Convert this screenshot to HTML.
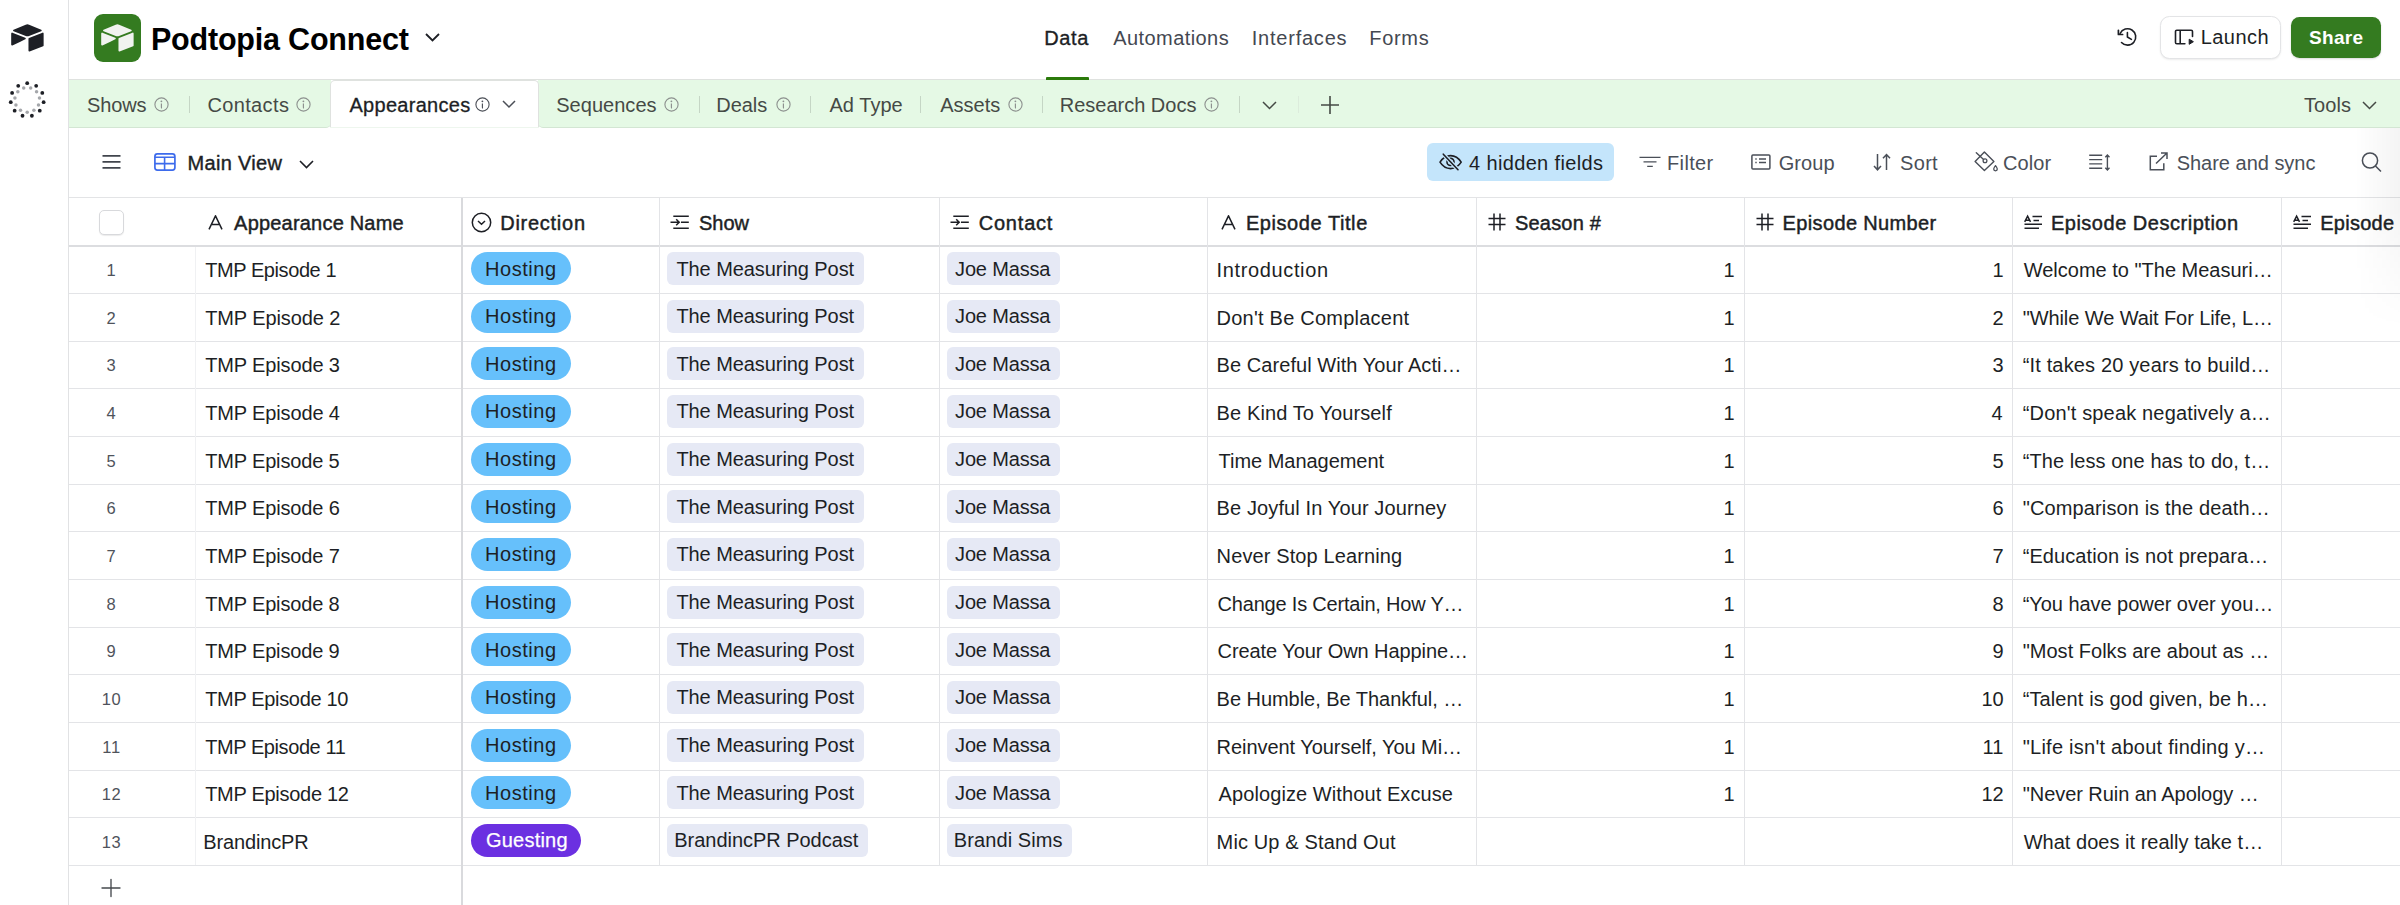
<!DOCTYPE html><html><head><meta charset="utf-8"><title>Podtopia Connect: Appearances</title><style>*{box-sizing:border-box;margin:0;padding:0}
html,body{width:2400px;height:905px;overflow:hidden;background:#fff;font-family:"Liberation Sans", sans-serif;color:#1d1f25}
.a{position:absolute}
.t{position:absolute;white-space:nowrap}
svg{position:absolute;overflow:visible}</style></head><body>
<div class="a" style="left:68px;top:0;width:1px;height:905px;background:#e1e2e4"></div>
<svg style="left:11px;top:23.5px" width="33" height="28" viewBox="10 10 180 150" fill="#1d1f25"><path d="M90.039 12.368 24.079 39.66c-3.667 1.519-3.63 6.729.062 8.192l66.235 26.266a24.58 24.58 0 0 0 18.12 0l66.236-26.266c3.69-1.463 3.729-6.673.06-8.191l-65.96-27.293a24.58 24.58 0 0 0-18.793 0"/><path d="M105.312 88.46v65.617c0 3.12 3.147 5.258 6.048 4.108l73.806-28.648a4.42 4.42 0 0 0 2.79-4.108V59.813c0-3.121-3.147-5.258-6.048-4.108l-73.806 28.648a4.42 4.420 0 0 0-2.79 4.108"/><path d="m88.078 91.846-21.904 10.576-2.224 1.075-46.238 22.155c-2.930 1.414-6.672-.722-6.672-3.978V60.088c0-1.178.604-2.195 1.414-2.96a5 5 0 0 1 1.12-.84c1.104-.663 2.68-.84 4.020-.31L87.71 83.76c3.564 1.414 3.844 6.408.368 8.087"/></svg>
<svg style="left:0;top:0" width="60" height="130"><circle cx="27.20" cy="83.20" r="1.9" fill="#1d1f25"/><circle cx="30.69" cy="87.90" r="1.75" fill="#a5a7ab"/><circle cx="36.17" cy="85.84" r="1.9" fill="#1d1f25"/><circle cx="36.57" cy="91.68" r="1.75" fill="#a5a7ab"/><circle cx="42.30" cy="92.90" r="1.9" fill="#1d1f25"/><circle cx="39.47" cy="98.04" r="1.75" fill="#a5a7ab"/><circle cx="43.63" cy="102.16" r="1.9" fill="#1d1f25"/><circle cx="38.48" cy="104.95" r="1.75" fill="#a5a7ab"/><circle cx="39.75" cy="110.67" r="1.9" fill="#1d1f25"/><circle cx="33.90" cy="110.23" r="1.75" fill="#a5a7ab"/><circle cx="31.88" cy="115.73" r="1.9" fill="#1d1f25"/><circle cx="27.20" cy="112.20" r="1.75" fill="#a5a7ab"/><circle cx="22.52" cy="115.73" r="1.9" fill="#1d1f25"/><circle cx="20.50" cy="110.23" r="1.75" fill="#a5a7ab"/><circle cx="14.65" cy="110.67" r="1.9" fill="#1d1f25"/><circle cx="15.92" cy="104.95" r="1.75" fill="#a5a7ab"/><circle cx="10.77" cy="102.16" r="1.9" fill="#1d1f25"/><circle cx="14.93" cy="98.04" r="1.75" fill="#a5a7ab"/><circle cx="12.10" cy="92.90" r="1.9" fill="#1d1f25"/><circle cx="17.83" cy="91.68" r="1.75" fill="#a5a7ab"/><circle cx="18.23" cy="85.84" r="1.9" fill="#1d1f25"/><circle cx="23.71" cy="87.90" r="1.75" fill="#a5a7ab"/></svg>
<div class="a" style="left:93.5px;top:14px;width:47.5px;height:47.5px;border-radius:9px;background:#347b20"></div>
<svg style="left:101px;top:24px" width="33" height="28" viewBox="10 10 180 150" fill="#f1f3f0"><path d="M90.039 12.368 24.079 39.66c-3.667 1.519-3.63 6.729.062 8.192l66.235 26.266a24.58 24.58 0 0 0 18.12 0l66.236-26.266c3.69-1.463 3.729-6.673.06-8.191l-65.96-27.293a24.58 24.58 0 0 0-18.793 0"/><path d="M105.312 88.46v65.617c0 3.12 3.147 5.258 6.048 4.108l73.806-28.648a4.42 4.42 0 0 0 2.79-4.108V59.813c0-3.121-3.147-5.258-6.048-4.108l-73.806 28.648a4.42 4.420 0 0 0-2.79 4.108"/><path d="m88.078 91.846-21.904 10.576-2.224 1.075-46.238 22.155c-2.930 1.414-6.672-.722-6.672-3.978V60.088c0-1.178.604-2.195 1.414-2.96a5 5 0 0 1 1.12-.84c1.104-.663 2.68-.84 4.020-.31L87.71 83.76c3.564 1.414 3.844 6.408.368 8.087"/></svg>
<svg style="left:425px;top:32.5px" width="15" height="9" viewBox="0 0 15 9"><path d="M1 1l6.5 6.5L14 1" fill="none" stroke="#1d1f25" stroke-width="1.8"/></svg>
<svg style="left:2116px;top:27px" width="22" height="21" viewBox="0 0 22 21"><path d="M4.1 6.5A8.2 8.2 0 1 1 5.5 15.5" fill="none" stroke="#1d1f25" stroke-width="1.6" stroke-linecap="round"/><path d="M2.4 3.3V7.5H6.6" fill="none" stroke="#1d1f25" stroke-width="1.7" stroke-linecap="round" stroke-linejoin="round"/><path d="M11.4 5.5V10L15.4 12.4" fill="none" stroke="#1d1f25" stroke-width="1.6" stroke-linecap="round" stroke-linejoin="round"/></svg>
<div class="a" style="left:2160px;top:16px;width:120.5px;height:43px;border-radius:9.5px;background:#fff;border:1px solid #e3e4e6;box-shadow:0 1px 2px rgba(0,0,0,0.08)"></div>
<svg style="left:2174px;top:29px" width="21" height="17" viewBox="0 0 21 17"><path d="M10.9 14.7H2.8A1.3 1.3 0 0 1 1.5 13.4V2.6A1.3 1.3 0 0 1 2.8 1.3H17.2A1.3 1.3 0 0 1 18.5 2.6V7.4M6.2 1.3V14.7" fill="none" stroke="#1d1f25" stroke-width="1.6" stroke-linecap="round"/><path d="M15.2 10.2L19.4 12.7L15.2 15.3Z" fill="#1d1f25" stroke="#1d1f25" stroke-width="1" stroke-linejoin="round"/></svg>
<div class="a" style="left:2291px;top:17px;width:90px;height:41px;border-radius:8.5px;background:#347b20;box-shadow:0 1px 2px rgba(0,0,0,0.15)"></div>
<div class="a" style="left:69px;top:79px;width:2331px;height:1px;background:#dfe2df"></div>
<div class="a" style="left:69px;top:80px;width:262px;height:48px;background:#e5f9e5;border-bottom:1px solid #d3e6d3;border-bottom-right-radius:5px"></div>
<div class="a" style="left:538px;top:80px;width:1862px;height:48px;background:#e5f9e5;border-bottom:1px solid #d3e6d3;border-bottom-left-radius:5px"></div>
<div class="a" style="left:330px;top:127px;width:209px;height:1px;background:#eef6ee"></div>
<div class="a" style="left:330px;top:80px;width:209px;height:47px;background:#fff;border-radius:5px 5px 0 0;border:1px solid #dfe2df;border-bottom:none"></div>
<svg style="left:154px;top:97px" width="15" height="15" viewBox="0 0 15 15"><circle cx="7.5" cy="7.5" r="6.6" fill="none" stroke="#8c908e" stroke-width="1.1"/><circle cx="7.4" cy="4.3" r="0.9" fill="#8c908e"/><path d="M7.4 6.4v4.2q0 0.6 0.6 0.7" fill="none" stroke="#8c908e" stroke-width="1.15"/></svg>
<div class="a" style="left:189px;top:96px;width:1px;height:17px;background:#c5d6c5"></div>
<svg style="left:296px;top:97px" width="15" height="15" viewBox="0 0 15 15"><circle cx="7.5" cy="7.5" r="6.6" fill="none" stroke="#8c908e" stroke-width="1.1"/><circle cx="7.4" cy="4.3" r="0.9" fill="#8c908e"/><path d="M7.4 6.4v4.2q0 0.6 0.6 0.7" fill="none" stroke="#8c908e" stroke-width="1.15"/></svg>
<svg style="left:475px;top:97px" width="15" height="15" viewBox="0 0 15 15"><circle cx="7.5" cy="7.5" r="6.6" fill="none" stroke="#4b4f57" stroke-width="1.1"/><circle cx="7.4" cy="4.3" r="0.9" fill="#4b4f57"/><path d="M7.4 6.4v4.2q0 0.6 0.6 0.7" fill="none" stroke="#4b4f57" stroke-width="1.15"/></svg>
<svg style="left:502px;top:99.7px" width="14" height="9" viewBox="0 0 14 9"><path d="M1 1l6 6 6-6" fill="none" stroke="#4b4f57" stroke-width="1.5"/></svg>
<svg style="left:664px;top:97px" width="15" height="15" viewBox="0 0 15 15"><circle cx="7.5" cy="7.5" r="6.6" fill="none" stroke="#8c908e" stroke-width="1.1"/><circle cx="7.4" cy="4.3" r="0.9" fill="#8c908e"/><path d="M7.4 6.4v4.2q0 0.6 0.6 0.7" fill="none" stroke="#8c908e" stroke-width="1.15"/></svg>
<div class="a" style="left:699px;top:96px;width:1px;height:17px;background:#c5d6c5"></div>
<svg style="left:775.5px;top:97px" width="15" height="15" viewBox="0 0 15 15"><circle cx="7.5" cy="7.5" r="6.6" fill="none" stroke="#8c908e" stroke-width="1.1"/><circle cx="7.4" cy="4.3" r="0.9" fill="#8c908e"/><path d="M7.4 6.4v4.2q0 0.6 0.6 0.7" fill="none" stroke="#8c908e" stroke-width="1.15"/></svg>
<div class="a" style="left:810px;top:96px;width:1px;height:17px;background:#c5d6c5"></div>
<div class="a" style="left:920px;top:96px;width:1px;height:17px;background:#c5d6c5"></div>
<svg style="left:1007.5px;top:97px" width="15" height="15" viewBox="0 0 15 15"><circle cx="7.5" cy="7.5" r="6.6" fill="none" stroke="#8c908e" stroke-width="1.1"/><circle cx="7.4" cy="4.3" r="0.9" fill="#8c908e"/><path d="M7.4 6.4v4.2q0 0.6 0.6 0.7" fill="none" stroke="#8c908e" stroke-width="1.15"/></svg>
<div class="a" style="left:1042px;top:96px;width:1px;height:17px;background:#c5d6c5"></div>
<svg style="left:1203.5px;top:97px" width="15" height="15" viewBox="0 0 15 15"><circle cx="7.5" cy="7.5" r="6.6" fill="none" stroke="#8c908e" stroke-width="1.1"/><circle cx="7.4" cy="4.3" r="0.9" fill="#8c908e"/><path d="M7.4 6.4v4.2q0 0.6 0.6 0.7" fill="none" stroke="#8c908e" stroke-width="1.15"/></svg>
<div class="a" style="left:1239px;top:96px;width:1px;height:17px;background:#c5d6c5"></div>
<div class="a" style="left:1298px;top:96px;width:1px;height:17px;background:#dcecdc"></div>
<svg style="left:1262px;top:100.5px" width="15" height="9" viewBox="0 0 15 9"><path d="M1 1l6.5 6.5L14 1" fill="none" stroke="#454a45" stroke-width="1.5"/></svg>
<svg style="left:1320px;top:95px" width="20" height="20" viewBox="0 0 20 20"><path d="M10 1v18M1 10h18" fill="none" stroke="#454a45" stroke-width="1.6"/></svg>
<svg style="left:2362px;top:100.5px" width="15" height="9" viewBox="0 0 15 9"><path d="M1 1l6.5 6.5L14 1" fill="none" stroke="#454a45" stroke-width="1.5"/></svg>
<div class="a" style="left:1046px;top:77px;width:42.5px;height:3px;background:#2b7a0b;border-radius:1px 1px 0 0"></div>
<div class="a" style="left:69px;top:197px;width:2331px;height:1px;background:#e3e4e6"></div>
<svg style="left:102px;top:154px" width="19" height="15" viewBox="0 0 19 15"><path d="M0.5 1.8h18M0.5 7.8h18M0.5 13.8h18" fill="none" stroke="#41454d" stroke-width="1.7"/></svg>
<svg style="left:154px;top:153px" width="22" height="18" viewBox="0 0 22 18"><rect x="0.9" y="0.9" width="20" height="16.2" rx="2.5" fill="none" stroke="#3d6bec" stroke-width="1.7"/><path d="M1 4.3h20M1 10.6h20M10.6 4.3v13" fill="none" stroke="#3d6bec" stroke-width="1.6"/></svg>
<svg style="left:299px;top:159.8px" width="15" height="9" viewBox="0 0 15 9"><path d="M1 1l6.5 6.5L14 1" fill="none" stroke="#1d1f25" stroke-width="1.6"/></svg>
<div class="a" style="left:1427px;top:143px;width:187px;height:38px;border-radius:6px;background:#c4e5fb"></div>
<svg style="left:1437px;top:152px" width="27" height="20" viewBox="0 0 27 20"><path d="M3 10.2C6 5.4 9.4 3.6 13.6 3.6S21.2 5.4 24.2 10.2C21.2 15 17.8 16.6 13.6 16.6S6 15 3 10.2Z" fill="none" stroke="#1d1f25" stroke-width="1.6" stroke-linejoin="round"/><circle cx="13.5" cy="9.9" r="3.5" fill="none" stroke="#1d1f25" stroke-width="1.6"/><path d="M6.3 2.2L21 17.7" stroke="#c4e5fb" stroke-width="4"/><path d="M6.3 2.2L21 17.7" stroke="#1d1f25" stroke-width="1.6" stroke-linecap="round"/></svg>
<svg style="left:1639px;top:155px" width="22" height="14" viewBox="0 0 22 14"><path d="M0.5 2.4h21M4.5 6.9h13M8.2 11.4h5.6" fill="none" stroke="#4a4f58" stroke-width="1.4"/></svg>
<svg style="left:1751px;top:154px" width="20" height="16" viewBox="0 0 20 16"><rect x="0.9" y="0.9" width="18" height="14" rx="1" fill="none" stroke="#4a4f58" stroke-width="1.5"/><path d="M4.3 5h1.4M8 5h7M4.3 8.5h1.4M8 8.5h7" fill="none" stroke="#4a4f58" stroke-width="1.5"/></svg>
<svg style="left:1873px;top:153px" width="19" height="18" viewBox="0 0 19 18"><path d="M4.5 1v15.5M1 13l3.5 3.8L8 13M13.5 17V1.5M10 5.3l3.5-3.8L17 5.3" fill="none" stroke="#4a4f58" stroke-width="1.5"/></svg>
<svg style="left:1972px;top:150px" width="27" height="23" viewBox="0 0 27 23"><path d="M12.4 1.9L21.9 11.5L12.4 20.5L3.1 11.5Z" fill="none" stroke="#4a4f58" stroke-width="1.4" stroke-linejoin="round"/><path d="M4.3 2.7L11.6 9.6" stroke="#4a4f58" stroke-width="1.4" stroke-linecap="round"/><circle cx="13" cy="10.8" r="1.9" fill="none" stroke="#4a4f58" stroke-width="1.3"/><path d="M23.5 15.6C24.7 17.1 25.3 18.2 25.3 19.1A1.8 1.8 0 0 1 21.7 19.1C21.7 18.2 22.3 17.1 23.5 15.6Z" fill="none" stroke="#4a4f58" stroke-width="1.3" stroke-linejoin="round"/></svg>
<svg style="left:2088px;top:154px" width="23" height="17" viewBox="0 0 23 17"><path d="M1.2 1.3h13M1.2 5.6h13M1.2 9.9h13M1.2 14.3h13M19.4 1v15M17.3 3.2L19.4 1.1l2.1 2.1M17.3 13.8L19.4 15.9l2.1-2.1" fill="none" stroke="#4a4f58" stroke-width="1.4"/></svg>
<svg style="left:2149px;top:152px" width="20" height="19" viewBox="0 0 20 19"><path d="M8 4.3H1.3v13.5h13.5v-6.5" fill="none" stroke="#4a4f58" stroke-width="1.5"/><path d="M7 11.5L18 1M12 1h6v6" fill="none" stroke="#4a4f58" stroke-width="1.5"/></svg>
<svg style="left:2361px;top:152px" width="22" height="20" viewBox="0 0 22 20"><circle cx="9" cy="8.5" r="7.6" fill="none" stroke="#4a4f58" stroke-width="1.5"/><path d="M14.5 14l5.5 5.5" stroke="#4a4f58" stroke-width="1.5"/></svg>
<div class="a" style="left:69px;top:245px;width:2331px;height:2px;background:#dcdde0"></div>
<div class="a" style="left:99px;top:210px;width:25px;height:25px;border-radius:5px;background:#fff;border:1px solid #d8d9dc;box-shadow:0 1px 1px rgba(0,0,0,0.08)"></div>
<div class="a" style="left:69px;top:293px;width:2331px;height:1px;background:#e3e4e7"></div>
<div class="a" style="left:69px;top:341px;width:2331px;height:1px;background:#e3e4e7"></div>
<div class="a" style="left:69px;top:388px;width:2331px;height:1px;background:#e3e4e7"></div>
<div class="a" style="left:69px;top:436px;width:2331px;height:1px;background:#e3e4e7"></div>
<div class="a" style="left:69px;top:484px;width:2331px;height:1px;background:#e3e4e7"></div>
<div class="a" style="left:69px;top:531px;width:2331px;height:1px;background:#e3e4e7"></div>
<div class="a" style="left:69px;top:579px;width:2331px;height:1px;background:#e3e4e7"></div>
<div class="a" style="left:69px;top:627px;width:2331px;height:1px;background:#e3e4e7"></div>
<div class="a" style="left:69px;top:674px;width:2331px;height:1px;background:#e3e4e7"></div>
<div class="a" style="left:69px;top:722px;width:2331px;height:1px;background:#e3e4e7"></div>
<div class="a" style="left:69px;top:770px;width:2331px;height:1px;background:#e3e4e7"></div>
<div class="a" style="left:69px;top:817px;width:2331px;height:1px;background:#e3e4e7"></div>
<div class="a" style="left:69px;top:865px;width:2331px;height:1px;background:#e3e4e7"></div>
<div class="a" style="left:195px;top:247px;width:1px;height:618px;background:#f0f1f3"></div>
<div class="a" style="left:461px;top:198px;width:2px;height:707px;background:#d9dadd"></div>
<div class="a" style="left:659px;top:198px;width:1px;height:667px;background:#e3e4e7"></div>
<div class="a" style="left:939px;top:198px;width:1px;height:667px;background:#e3e4e7"></div>
<div class="a" style="left:1207px;top:198px;width:1px;height:667px;background:#e3e4e7"></div>
<div class="a" style="left:1476px;top:198px;width:1px;height:667px;background:#e3e4e7"></div>
<div class="a" style="left:1744px;top:198px;width:1px;height:667px;background:#e3e4e7"></div>
<div class="a" style="left:2012px;top:198px;width:1px;height:667px;background:#e3e4e7"></div>
<div class="a" style="left:2281px;top:198px;width:1px;height:667px;background:#e3e4e7"></div>
<svg style="left:207.5px;top:215px" width="16" height="16" viewBox="0 0 16 16"><path d="M1 14.3L7.5 0.8 14 14.3M4 9.4h7" fill="none" stroke="#1d1f25" stroke-width="1.5" stroke-linejoin="round"/></svg>
<svg style="left:471px;top:212px" width="21" height="21" viewBox="0 0 21 21"><circle cx="10.5" cy="10.5" r="9.2" fill="none" stroke="#1d1f25" stroke-width="1.5"/><path d="M7 9l3.5 3.3L14 9" fill="none" stroke="#1d1f25" stroke-width="1.5"/></svg>
<svg style="left:670px;top:214.8px" width="20" height="15" viewBox="0 0 20 15"><path d="M3.3 1.2h15.5M11 7.2h7.8M3.3 13.2h15.5M0.5 7.2h8.3M6.2 4.2l3 3-3 3" fill="none" stroke="#1d1f25" stroke-width="1.5"/></svg>
<svg style="left:950px;top:214.8px" width="20" height="15" viewBox="0 0 20 15"><path d="M3.3 1.2h15.5M11 7.2h7.8M3.3 13.2h15.5M0.5 7.2h8.3M6.2 4.2l3 3-3 3" fill="none" stroke="#1d1f25" stroke-width="1.5"/></svg>
<svg style="left:1220.5px;top:215px" width="16" height="16" viewBox="0 0 16 16"><path d="M1 14.3L7.5 0.8 14 14.3M4 9.4h7" fill="none" stroke="#1d1f25" stroke-width="1.5" stroke-linejoin="round"/></svg>
<svg style="left:1487.6px;top:213px" width="18" height="18" viewBox="0 0 18 18"><path d="M6 0.5v17M12 0.5v17M0.5 5.5h17M0.5 11.5h17" fill="none" stroke="#1d1f25" stroke-width="1.5"/></svg>
<svg style="left:1755.6px;top:213px" width="18" height="18" viewBox="0 0 18 18"><path d="M6 0.5v17M12 0.5v17M0.5 5.5h17M0.5 11.5h17" fill="none" stroke="#1d1f25" stroke-width="1.5"/></svg>
<svg style="left:2024px;top:215px" width="19" height="15" viewBox="0 0 19 15"><path d="M0.7 6.9L3.6 1.1 6.5 6.9M1.7 5.2h3.8M8.5 1.5h9.5M9.5 5.5h5.5M0.5 9.3h17.5M0.5 13.2h14.5" fill="none" stroke="#1d1f25" stroke-width="1.5"/></svg>
<svg style="left:2292.5px;top:215px" width="19" height="15" viewBox="0 0 19 15"><path d="M0.7 6.9L3.6 1.1 6.5 6.9M1.7 5.2h3.8M8.5 1.5h9.5M9.5 5.5h5.5M0.5 9.3h17.5M0.5 13.2h14.5" fill="none" stroke="#1d1f25" stroke-width="1.5"/></svg>
<div class="a" style="left:470.8px;top:252px;width:100.2px;height:33px;border-radius:17px;background:#66c0fb"></div>
<div class="a" style="left:666.5px;top:252px;width:197.4px;height:33px;border-radius:6px;background:#e6e9f5"></div>
<div class="a" style="left:947.0px;top:252px;width:113.1px;height:33px;border-radius:6px;background:#e6e9f5"></div>
<div class="a" style="left:470.8px;top:300px;width:100.2px;height:33px;border-radius:17px;background:#66c0fb"></div>
<div class="a" style="left:666.5px;top:300px;width:197.4px;height:33px;border-radius:6px;background:#e6e9f5"></div>
<div class="a" style="left:947.0px;top:300px;width:113.1px;height:33px;border-radius:6px;background:#e6e9f5"></div>
<div class="a" style="left:470.8px;top:347px;width:100.2px;height:33px;border-radius:17px;background:#66c0fb"></div>
<div class="a" style="left:666.5px;top:347px;width:197.4px;height:33px;border-radius:6px;background:#e6e9f5"></div>
<div class="a" style="left:947.0px;top:347px;width:113.1px;height:33px;border-radius:6px;background:#e6e9f5"></div>
<div class="a" style="left:470.8px;top:395px;width:100.2px;height:33px;border-radius:17px;background:#66c0fb"></div>
<div class="a" style="left:666.5px;top:395px;width:197.4px;height:33px;border-radius:6px;background:#e6e9f5"></div>
<div class="a" style="left:947.0px;top:395px;width:113.1px;height:33px;border-radius:6px;background:#e6e9f5"></div>
<div class="a" style="left:470.8px;top:443px;width:100.2px;height:33px;border-radius:17px;background:#66c0fb"></div>
<div class="a" style="left:666.5px;top:443px;width:197.4px;height:33px;border-radius:6px;background:#e6e9f5"></div>
<div class="a" style="left:947.0px;top:443px;width:113.1px;height:33px;border-radius:6px;background:#e6e9f5"></div>
<div class="a" style="left:470.8px;top:490px;width:100.2px;height:33px;border-radius:17px;background:#66c0fb"></div>
<div class="a" style="left:666.5px;top:490px;width:197.4px;height:33px;border-radius:6px;background:#e6e9f5"></div>
<div class="a" style="left:947.0px;top:490px;width:113.1px;height:33px;border-radius:6px;background:#e6e9f5"></div>
<div class="a" style="left:470.8px;top:538px;width:100.2px;height:33px;border-radius:17px;background:#66c0fb"></div>
<div class="a" style="left:666.5px;top:538px;width:197.4px;height:33px;border-radius:6px;background:#e6e9f5"></div>
<div class="a" style="left:947.0px;top:538px;width:113.1px;height:33px;border-radius:6px;background:#e6e9f5"></div>
<div class="a" style="left:470.8px;top:586px;width:100.2px;height:33px;border-radius:17px;background:#66c0fb"></div>
<div class="a" style="left:666.5px;top:586px;width:197.4px;height:33px;border-radius:6px;background:#e6e9f5"></div>
<div class="a" style="left:947.0px;top:586px;width:113.1px;height:33px;border-radius:6px;background:#e6e9f5"></div>
<div class="a" style="left:470.8px;top:633px;width:100.2px;height:33px;border-radius:17px;background:#66c0fb"></div>
<div class="a" style="left:666.5px;top:633px;width:197.4px;height:33px;border-radius:6px;background:#e6e9f5"></div>
<div class="a" style="left:947.0px;top:633px;width:113.1px;height:33px;border-radius:6px;background:#e6e9f5"></div>
<div class="a" style="left:470.8px;top:681px;width:100.2px;height:33px;border-radius:17px;background:#66c0fb"></div>
<div class="a" style="left:666.5px;top:681px;width:197.4px;height:33px;border-radius:6px;background:#e6e9f5"></div>
<div class="a" style="left:947.0px;top:681px;width:113.1px;height:33px;border-radius:6px;background:#e6e9f5"></div>
<div class="a" style="left:470.8px;top:729px;width:100.2px;height:33px;border-radius:17px;background:#66c0fb"></div>
<div class="a" style="left:666.5px;top:729px;width:197.4px;height:33px;border-radius:6px;background:#e6e9f5"></div>
<div class="a" style="left:947.0px;top:729px;width:113.1px;height:33px;border-radius:6px;background:#e6e9f5"></div>
<div class="a" style="left:470.8px;top:776px;width:100.2px;height:33px;border-radius:17px;background:#66c0fb"></div>
<div class="a" style="left:666.5px;top:776px;width:197.4px;height:33px;border-radius:6px;background:#e6e9f5"></div>
<div class="a" style="left:947.0px;top:776px;width:113.1px;height:33px;border-radius:6px;background:#e6e9f5"></div>
<div class="a" style="left:470.7px;top:824px;width:110.6px;height:33px;border-radius:17px;background:#6b30e1"></div>
<div class="a" style="left:666.5px;top:824px;width:201.0px;height:33px;border-radius:6px;background:#e6e9f5"></div>
<div class="a" style="left:947.0px;top:824px;width:124.6px;height:33px;border-radius:6px;background:#e6e9f5"></div>
<div class="t" style="left:150.90px;top:21px;font-size:30.5px;line-height:37px;color:#000;font-weight:700;letter-spacing:-0.193px;">Podtopia Connect</div>
<div class="t" style="left:1044.20px;top:26px;font-size:20px;line-height:24px;color:#1d1f25;letter-spacing:0.633px;-webkit-text-stroke:0.35px #1d1f25">Data</div>
<div class="t" style="left:1113.20px;top:26px;font-size:20px;line-height:24px;color:#444851;letter-spacing:0.430px;">Automations</div>
<div class="t" style="left:1251.80px;top:26px;font-size:20px;line-height:24px;color:#444851;letter-spacing:0.767px;">Interfaces</div>
<div class="t" style="left:1369.30px;top:26px;font-size:20px;line-height:24px;color:#444851;letter-spacing:0.675px;">Forms</div>
<div class="t" style="left:2200.75px;top:25px;font-size:20px;line-height:24px;color:#1d1f25;letter-spacing:0.430px;">Launch</div>
<div class="t" style="left:2309.00px;top:26px;font-size:19px;line-height:23px;color:#fff;font-weight:700;letter-spacing:0.312px;">Share</div>
<div class="t" style="left:87.00px;top:93px;font-size:20px;line-height:24px;color:#454a45;letter-spacing:-0.125px;">Shows</div>
<div class="t" style="left:207.40px;top:93px;font-size:20px;line-height:24px;color:#454a45;letter-spacing:0.371px;">Contacts</div>
<div class="t" style="left:556.20px;top:93px;font-size:20px;line-height:24px;color:#454a45;letter-spacing:0.037px;">Sequences</div>
<div class="t" style="left:716.30px;top:93px;font-size:20px;line-height:24px;color:#454a45;letter-spacing:-0.075px;">Deals</div>
<div class="t" style="left:829.50px;top:93px;font-size:20px;line-height:24px;color:#454a45;letter-spacing:0.033px;">Ad Type</div>
<div class="t" style="left:940.20px;top:93px;font-size:20px;line-height:24px;color:#454a45;">Assets</div>
<div class="t" style="left:1059.70px;top:93px;font-size:20px;line-height:24px;color:#454a45;">Research Docs</div>
<div class="t" style="left:2304.00px;top:93px;font-size:20px;line-height:24px;color:#454a45;letter-spacing:0.075px;">Tools</div>
<div class="t" style="left:349.40px;top:93px;font-size:20px;line-height:24px;color:#1d1f25;letter-spacing:0.300px;-webkit-text-stroke:0.3px #1d1f25">Appearances</div>
<div class="t" style="left:187.50px;top:151px;font-size:20px;line-height:24px;color:#1d1f25;letter-spacing:0.312px;-webkit-text-stroke:0.4px #1d1f25">Main View</div>
<div class="t" style="left:1469.10px;top:151px;font-size:20px;line-height:24px;color:#1d1f25;letter-spacing:0.343px;">4 hidden fields</div>
<div class="t" style="left:1667.00px;top:151px;font-size:20px;line-height:24px;color:#4a4f58;letter-spacing:0.360px;">Filter</div>
<div class="t" style="left:1778.70px;top:151px;font-size:20px;line-height:24px;color:#4a4f58;letter-spacing:0.075px;">Group</div>
<div class="t" style="left:1900.00px;top:151px;font-size:20px;line-height:24px;color:#4a4f58;letter-spacing:0.333px;">Sort</div>
<div class="t" style="left:2003.00px;top:151px;font-size:20px;line-height:24px;color:#4a4f58;letter-spacing:0.075px;">Color</div>
<div class="t" style="left:2176.70px;top:151px;font-size:20px;line-height:24px;color:#4a4f58;letter-spacing:-0.015px;">Share and sync</div>
<div class="t" style="left:234.10px;top:211px;font-size:20px;line-height:24px;color:#1d1f25;letter-spacing:0.200px;-webkit-text-stroke:0.45px #1d1f25">Appearance Name</div>
<div class="t" style="left:500.25px;top:211px;font-size:20px;line-height:24px;color:#1d1f25;letter-spacing:0.731px;-webkit-text-stroke:0.45px #1d1f25">Direction</div>
<div class="t" style="left:699.00px;top:211px;font-size:20px;line-height:24px;color:#1d1f25;-webkit-text-stroke:0.45px #1d1f25">Show</div>
<div class="t" style="left:978.70px;top:211px;font-size:20px;line-height:24px;color:#1d1f25;letter-spacing:0.800px;-webkit-text-stroke:0.45px #1d1f25">Contact</div>
<div class="t" style="left:1245.90px;top:211px;font-size:20px;line-height:24px;color:#1d1f25;letter-spacing:0.571px;-webkit-text-stroke:0.45px #1d1f25">Episode Title</div>
<div class="t" style="left:1515.00px;top:211px;font-size:20px;line-height:24px;color:#1d1f25;letter-spacing:0.186px;-webkit-text-stroke:0.45px #1d1f25">Season #</div>
<div class="t" style="left:1782.60px;top:211px;font-size:20px;line-height:24px;color:#1d1f25;letter-spacing:0.358px;-webkit-text-stroke:0.45px #1d1f25">Episode Number</div>
<div class="t" style="left:2050.90px;top:211px;font-size:20px;line-height:24px;color:#1d1f25;letter-spacing:0.519px;-webkit-text-stroke:0.45px #1d1f25">Episode Description</div>
<div class="t" style="left:2320.25px;top:211px;font-size:20px;line-height:24px;color:#1d1f25;letter-spacing:0.250px;-webkit-text-stroke:0.45px #1d1f25">Episode</div>
<div class="t" style="left:68px;width:87px;text-align:center;top:260px;font-size:16.5px;line-height:20px;color:#4f535b;letter-spacing:0.6px">1</div>
<div class="t" style="left:205.20px;top:258px;font-size:20px;line-height:24px;color:#1d1f25;letter-spacing:-0.417px;">TMP Episode 1</div>
<div class="t" style="left:485.10px;top:257px;font-size:20px;line-height:24px;color:#1d1f25;letter-spacing:0.517px;">Hosting</div>
<div class="t" style="left:676.40px;top:257px;font-size:20px;line-height:24px;color:#1d1f25;letter-spacing:-0.071px;">The Measuring Post</div>
<div class="t" style="left:955.10px;top:257px;font-size:20px;line-height:24px;color:#1d1f25;letter-spacing:-0.175px;">Joe Massa</div>
<div class="t" style="left:1216.60px;top:258px;font-size:20px;line-height:24px;color:#1d1f25;letter-spacing:0.627px;">Introduction</div>
<div class="t" style="left:1723.50px;top:258px;font-size:20px;line-height:24px;color:#1d1f25;">1</div>
<div class="t" style="left:1992.50px;top:258px;font-size:20px;line-height:24px;color:#1d1f25;">1</div>
<div class="t" style="left:2023.70px;top:258px;font-size:20px;line-height:24px;color:#1d1f25;">Welcome to "The Measuri…</div>
<div class="t" style="left:68px;width:87px;text-align:center;top:308px;font-size:16.5px;line-height:20px;color:#4f535b;letter-spacing:0.6px">2</div>
<div class="t" style="left:205.20px;top:306px;font-size:20px;line-height:24px;color:#1d1f25;letter-spacing:-0.108px;">TMP Episode 2</div>
<div class="t" style="left:485.10px;top:304px;font-size:20px;line-height:24px;color:#1d1f25;letter-spacing:0.517px;">Hosting</div>
<div class="t" style="left:676.40px;top:304px;font-size:20px;line-height:24px;color:#1d1f25;letter-spacing:-0.071px;">The Measuring Post</div>
<div class="t" style="left:955.10px;top:304px;font-size:20px;line-height:24px;color:#1d1f25;letter-spacing:-0.175px;">Joe Massa</div>
<div class="t" style="left:1216.60px;top:306px;font-size:20px;line-height:24px;color:#1d1f25;letter-spacing:0.228px;">Don't Be Complacent</div>
<div class="t" style="left:1723.50px;top:306px;font-size:20px;line-height:24px;color:#1d1f25;">1</div>
<div class="t" style="left:1992.50px;top:306px;font-size:20px;line-height:24px;color:#1d1f25;">2</div>
<div class="t" style="left:2022.70px;top:306px;font-size:20px;line-height:24px;color:#1d1f25;letter-spacing:-0.092px;">"While We Wait For Life, L…</div>
<div class="t" style="left:68px;width:87px;text-align:center;top:355px;font-size:16.5px;line-height:20px;color:#4f535b;letter-spacing:0.6px">3</div>
<div class="t" style="left:205.20px;top:353px;font-size:20px;line-height:24px;color:#1d1f25;letter-spacing:-0.133px;">TMP Episode 3</div>
<div class="t" style="left:485.10px;top:352px;font-size:20px;line-height:24px;color:#1d1f25;letter-spacing:0.517px;">Hosting</div>
<div class="t" style="left:676.40px;top:352px;font-size:20px;line-height:24px;color:#1d1f25;letter-spacing:-0.071px;">The Measuring Post</div>
<div class="t" style="left:955.10px;top:352px;font-size:20px;line-height:24px;color:#1d1f25;letter-spacing:-0.175px;">Joe Massa</div>
<div class="t" style="left:1216.60px;top:353px;font-size:20px;line-height:24px;color:#1d1f25;letter-spacing:0.060px;">Be Careful With Your Acti…</div>
<div class="t" style="left:1723.50px;top:353px;font-size:20px;line-height:24px;color:#1d1f25;">1</div>
<div class="t" style="left:1992.50px;top:353px;font-size:20px;line-height:24px;color:#1d1f25;">3</div>
<div class="t" style="left:2022.70px;top:353px;font-size:20px;line-height:24px;color:#1d1f25;letter-spacing:0.156px;">“It takes 20 years to build…</div>
<div class="t" style="left:68px;width:87px;text-align:center;top:403px;font-size:16.5px;line-height:20px;color:#4f535b;letter-spacing:0.6px">4</div>
<div class="t" style="left:205.20px;top:401px;font-size:20px;line-height:24px;color:#1d1f25;letter-spacing:-0.133px;">TMP Episode 4</div>
<div class="t" style="left:485.10px;top:399px;font-size:20px;line-height:24px;color:#1d1f25;letter-spacing:0.517px;">Hosting</div>
<div class="t" style="left:676.40px;top:399px;font-size:20px;line-height:24px;color:#1d1f25;letter-spacing:-0.071px;">The Measuring Post</div>
<div class="t" style="left:955.10px;top:399px;font-size:20px;line-height:24px;color:#1d1f25;letter-spacing:-0.175px;">Joe Massa</div>
<div class="t" style="left:1216.60px;top:401px;font-size:20px;line-height:24px;color:#1d1f25;letter-spacing:0.111px;">Be Kind To Yourself</div>
<div class="t" style="left:1723.50px;top:401px;font-size:20px;line-height:24px;color:#1d1f25;">1</div>
<div class="t" style="left:1991.50px;top:401px;font-size:20px;line-height:24px;color:#1d1f25;">4</div>
<div class="t" style="left:2022.70px;top:401px;font-size:20px;line-height:24px;color:#1d1f25;letter-spacing:0.168px;">“Don't speak negatively a…</div>
<div class="t" style="left:68px;width:87px;text-align:center;top:451px;font-size:16.5px;line-height:20px;color:#4f535b;letter-spacing:0.6px">5</div>
<div class="t" style="left:205.20px;top:449px;font-size:20px;line-height:24px;color:#1d1f25;letter-spacing:-0.158px;">TMP Episode 5</div>
<div class="t" style="left:485.10px;top:447px;font-size:20px;line-height:24px;color:#1d1f25;letter-spacing:0.517px;">Hosting</div>
<div class="t" style="left:676.40px;top:447px;font-size:20px;line-height:24px;color:#1d1f25;letter-spacing:-0.071px;">The Measuring Post</div>
<div class="t" style="left:955.10px;top:447px;font-size:20px;line-height:24px;color:#1d1f25;letter-spacing:-0.175px;">Joe Massa</div>
<div class="t" style="left:1218.60px;top:449px;font-size:20px;line-height:24px;color:#1d1f25;letter-spacing:-0.036px;">Time Management</div>
<div class="t" style="left:1723.50px;top:449px;font-size:20px;line-height:24px;color:#1d1f25;">1</div>
<div class="t" style="left:1992.50px;top:449px;font-size:20px;line-height:24px;color:#1d1f25;">5</div>
<div class="t" style="left:2022.70px;top:449px;font-size:20px;line-height:24px;color:#1d1f25;letter-spacing:0.069px;">“The less one has to do, t…</div>
<div class="t" style="left:68px;width:87px;text-align:center;top:498px;font-size:16.5px;line-height:20px;color:#4f535b;letter-spacing:0.6px">6</div>
<div class="t" style="left:205.20px;top:496px;font-size:20px;line-height:24px;color:#1d1f25;letter-spacing:-0.142px;">TMP Episode 6</div>
<div class="t" style="left:485.10px;top:495px;font-size:20px;line-height:24px;color:#1d1f25;letter-spacing:0.517px;">Hosting</div>
<div class="t" style="left:676.40px;top:495px;font-size:20px;line-height:24px;color:#1d1f25;letter-spacing:-0.071px;">The Measuring Post</div>
<div class="t" style="left:955.10px;top:495px;font-size:20px;line-height:24px;color:#1d1f25;letter-spacing:-0.175px;">Joe Massa</div>
<div class="t" style="left:1216.60px;top:496px;font-size:20px;line-height:24px;color:#1d1f25;letter-spacing:0.117px;">Be Joyful In Your Journey</div>
<div class="t" style="left:1723.50px;top:496px;font-size:20px;line-height:24px;color:#1d1f25;">1</div>
<div class="t" style="left:1992.50px;top:496px;font-size:20px;line-height:24px;color:#1d1f25;">6</div>
<div class="t" style="left:2022.70px;top:496px;font-size:20px;line-height:24px;color:#1d1f25;letter-spacing:0.129px;">"Comparison is the death…</div>
<div class="t" style="left:68px;width:87px;text-align:center;top:546px;font-size:16.5px;line-height:20px;color:#4f535b;letter-spacing:0.6px">7</div>
<div class="t" style="left:205.20px;top:544px;font-size:20px;line-height:24px;color:#1d1f25;letter-spacing:-0.142px;">TMP Episode 7</div>
<div class="t" style="left:485.10px;top:542px;font-size:20px;line-height:24px;color:#1d1f25;letter-spacing:0.517px;">Hosting</div>
<div class="t" style="left:676.40px;top:542px;font-size:20px;line-height:24px;color:#1d1f25;letter-spacing:-0.071px;">The Measuring Post</div>
<div class="t" style="left:955.10px;top:542px;font-size:20px;line-height:24px;color:#1d1f25;letter-spacing:-0.175px;">Joe Massa</div>
<div class="t" style="left:1216.60px;top:544px;font-size:20px;line-height:24px;color:#1d1f25;letter-spacing:0.117px;">Never Stop Learning</div>
<div class="t" style="left:1723.50px;top:544px;font-size:20px;line-height:24px;color:#1d1f25;">1</div>
<div class="t" style="left:1992.50px;top:544px;font-size:20px;line-height:24px;color:#1d1f25;">7</div>
<div class="t" style="left:2022.70px;top:544px;font-size:20px;line-height:24px;color:#1d1f25;letter-spacing:0.080px;">“Education is not prepara…</div>
<div class="t" style="left:68px;width:87px;text-align:center;top:594px;font-size:16.5px;line-height:20px;color:#4f535b;letter-spacing:0.6px">8</div>
<div class="t" style="left:205.20px;top:592px;font-size:20px;line-height:24px;color:#1d1f25;letter-spacing:-0.158px;">TMP Episode 8</div>
<div class="t" style="left:485.10px;top:590px;font-size:20px;line-height:24px;color:#1d1f25;letter-spacing:0.517px;">Hosting</div>
<div class="t" style="left:676.40px;top:590px;font-size:20px;line-height:24px;color:#1d1f25;letter-spacing:-0.071px;">The Measuring Post</div>
<div class="t" style="left:955.10px;top:590px;font-size:20px;line-height:24px;color:#1d1f25;letter-spacing:-0.175px;">Joe Massa</div>
<div class="t" style="left:1217.60px;top:592px;font-size:20px;line-height:24px;color:#1d1f25;letter-spacing:-0.204px;">Change Is Certain, How Y…</div>
<div class="t" style="left:1723.50px;top:592px;font-size:20px;line-height:24px;color:#1d1f25;">1</div>
<div class="t" style="left:1992.50px;top:592px;font-size:20px;line-height:24px;color:#1d1f25;">8</div>
<div class="t" style="left:2022.70px;top:592px;font-size:20px;line-height:24px;color:#1d1f25;letter-spacing:-0.046px;">“You have power over you…</div>
<div class="t" style="left:68px;width:87px;text-align:center;top:641px;font-size:16.5px;line-height:20px;color:#4f535b;letter-spacing:0.6px">9</div>
<div class="t" style="left:205.20px;top:639px;font-size:20px;line-height:24px;color:#1d1f25;letter-spacing:-0.158px;">TMP Episode 9</div>
<div class="t" style="left:485.10px;top:638px;font-size:20px;line-height:24px;color:#1d1f25;letter-spacing:0.517px;">Hosting</div>
<div class="t" style="left:676.40px;top:638px;font-size:20px;line-height:24px;color:#1d1f25;letter-spacing:-0.071px;">The Measuring Post</div>
<div class="t" style="left:955.10px;top:638px;font-size:20px;line-height:24px;color:#1d1f25;letter-spacing:-0.175px;">Joe Massa</div>
<div class="t" style="left:1217.60px;top:639px;font-size:20px;line-height:24px;color:#1d1f25;letter-spacing:-0.087px;">Create Your Own Happine…</div>
<div class="t" style="left:1723.50px;top:639px;font-size:20px;line-height:24px;color:#1d1f25;">1</div>
<div class="t" style="left:1992.50px;top:639px;font-size:20px;line-height:24px;color:#1d1f25;">9</div>
<div class="t" style="left:2022.70px;top:639px;font-size:20px;line-height:24px;color:#1d1f25;letter-spacing:0.016px;">"Most Folks are about as …</div>
<div class="t" style="left:68px;width:87px;text-align:center;top:689px;font-size:16.5px;line-height:20px;color:#4f535b;letter-spacing:0.6px">10</div>
<div class="t" style="left:205.20px;top:687px;font-size:20px;line-height:24px;color:#1d1f25;letter-spacing:-0.331px;">TMP Episode 10</div>
<div class="t" style="left:485.10px;top:685px;font-size:20px;line-height:24px;color:#1d1f25;letter-spacing:0.517px;">Hosting</div>
<div class="t" style="left:676.40px;top:685px;font-size:20px;line-height:24px;color:#1d1f25;letter-spacing:-0.071px;">The Measuring Post</div>
<div class="t" style="left:955.10px;top:685px;font-size:20px;line-height:24px;color:#1d1f25;letter-spacing:-0.175px;">Joe Massa</div>
<div class="t" style="left:1216.60px;top:687px;font-size:20px;line-height:24px;color:#1d1f25;letter-spacing:-0.037px;">Be Humble, Be Thankful, …</div>
<div class="t" style="left:1723.50px;top:687px;font-size:20px;line-height:24px;color:#1d1f25;">1</div>
<div class="t" style="left:1981.50px;top:687px;font-size:20px;line-height:24px;color:#1d1f25;">10</div>
<div class="t" style="left:2022.70px;top:687px;font-size:20px;line-height:24px;color:#1d1f25;letter-spacing:0.115px;">“Talent is god given, be h…</div>
<div class="t" style="left:68px;width:87px;text-align:center;top:737px;font-size:16.5px;line-height:20px;color:#4f535b;letter-spacing:0.6px">11</div>
<div class="t" style="left:205.20px;top:735px;font-size:20px;line-height:24px;color:#1d1f25;letter-spacing:-0.415px;">TMP Episode 11</div>
<div class="t" style="left:485.10px;top:733px;font-size:20px;line-height:24px;color:#1d1f25;letter-spacing:0.517px;">Hosting</div>
<div class="t" style="left:676.40px;top:733px;font-size:20px;line-height:24px;color:#1d1f25;letter-spacing:-0.071px;">The Measuring Post</div>
<div class="t" style="left:955.10px;top:733px;font-size:20px;line-height:24px;color:#1d1f25;letter-spacing:-0.175px;">Joe Massa</div>
<div class="t" style="left:1216.60px;top:735px;font-size:20px;line-height:24px;color:#1d1f25;letter-spacing:-0.052px;">Reinvent Yourself, You Mi…</div>
<div class="t" style="left:1723.50px;top:735px;font-size:20px;line-height:24px;color:#1d1f25;">1</div>
<div class="t" style="left:1982.50px;top:735px;font-size:20px;line-height:24px;color:#1d1f25;">11</div>
<div class="t" style="left:2022.70px;top:735px;font-size:20px;line-height:24px;color:#1d1f25;letter-spacing:0.248px;">"Life isn't about finding y…</div>
<div class="t" style="left:68px;width:87px;text-align:center;top:784px;font-size:16.5px;line-height:20px;color:#4f535b;letter-spacing:0.6px">12</div>
<div class="t" style="left:205.20px;top:782px;font-size:20px;line-height:24px;color:#1d1f25;letter-spacing:-0.285px;">TMP Episode 12</div>
<div class="t" style="left:485.10px;top:781px;font-size:20px;line-height:24px;color:#1d1f25;letter-spacing:0.517px;">Hosting</div>
<div class="t" style="left:676.40px;top:781px;font-size:20px;line-height:24px;color:#1d1f25;letter-spacing:-0.071px;">The Measuring Post</div>
<div class="t" style="left:955.10px;top:781px;font-size:20px;line-height:24px;color:#1d1f25;letter-spacing:-0.175px;">Joe Massa</div>
<div class="t" style="left:1218.60px;top:782px;font-size:20px;line-height:24px;color:#1d1f25;letter-spacing:0.087px;">Apologize Without Excuse</div>
<div class="t" style="left:1723.50px;top:782px;font-size:20px;line-height:24px;color:#1d1f25;">1</div>
<div class="t" style="left:1981.50px;top:782px;font-size:20px;line-height:24px;color:#1d1f25;">12</div>
<div class="t" style="left:2022.70px;top:782px;font-size:20px;line-height:24px;color:#1d1f25;letter-spacing:-0.052px;">"Never Ruin an Apology …</div>
<div class="t" style="left:68px;width:87px;text-align:center;top:832px;font-size:16.5px;line-height:20px;color:#4f535b;letter-spacing:0.6px">13</div>
<div class="t" style="left:203.20px;top:830px;font-size:20px;line-height:24px;color:#1d1f25;letter-spacing:-0.133px;">BrandincPR</div>
<div class="t" style="left:486.00px;top:828px;font-size:20px;line-height:24px;color:#fff;letter-spacing:0.214px;-webkit-text-stroke:0.25px #fff">Guesting</div>
<div class="t" style="left:674.30px;top:828px;font-size:20px;line-height:24px;color:#1d1f25;letter-spacing:-0.035px;">BrandincPR Podcast</div>
<div class="t" style="left:953.80px;top:828px;font-size:20px;line-height:24px;color:#1d1f25;letter-spacing:0.095px;">Brandi Sims</div>
<div class="t" style="left:1216.60px;top:830px;font-size:20px;line-height:24px;color:#1d1f25;letter-spacing:0.135px;">Mic Up &amp; Stand Out</div>
<div class="t" style="left:2023.70px;top:830px;font-size:20px;line-height:24px;color:#1d1f25;letter-spacing:0.019px;">What does it really take t…</div>
<svg style="left:101.2px;top:878.4px" width="20" height="20" viewBox="0 0 20 20"><path d="M10 1.3v17.3M1 10h18" fill="none" stroke="#46494e" stroke-width="1.35" stroke-linecap="round"/></svg>
<div class="a" style="left:2355px;top:128px;width:45px;height:200px;background:linear-gradient(to right,rgba(0,0,0,0),rgba(0,0,0,0.045));-webkit-mask-image:linear-gradient(to bottom,#000 0%,#000 40%,transparent 100%)"></div>
</body></html>
